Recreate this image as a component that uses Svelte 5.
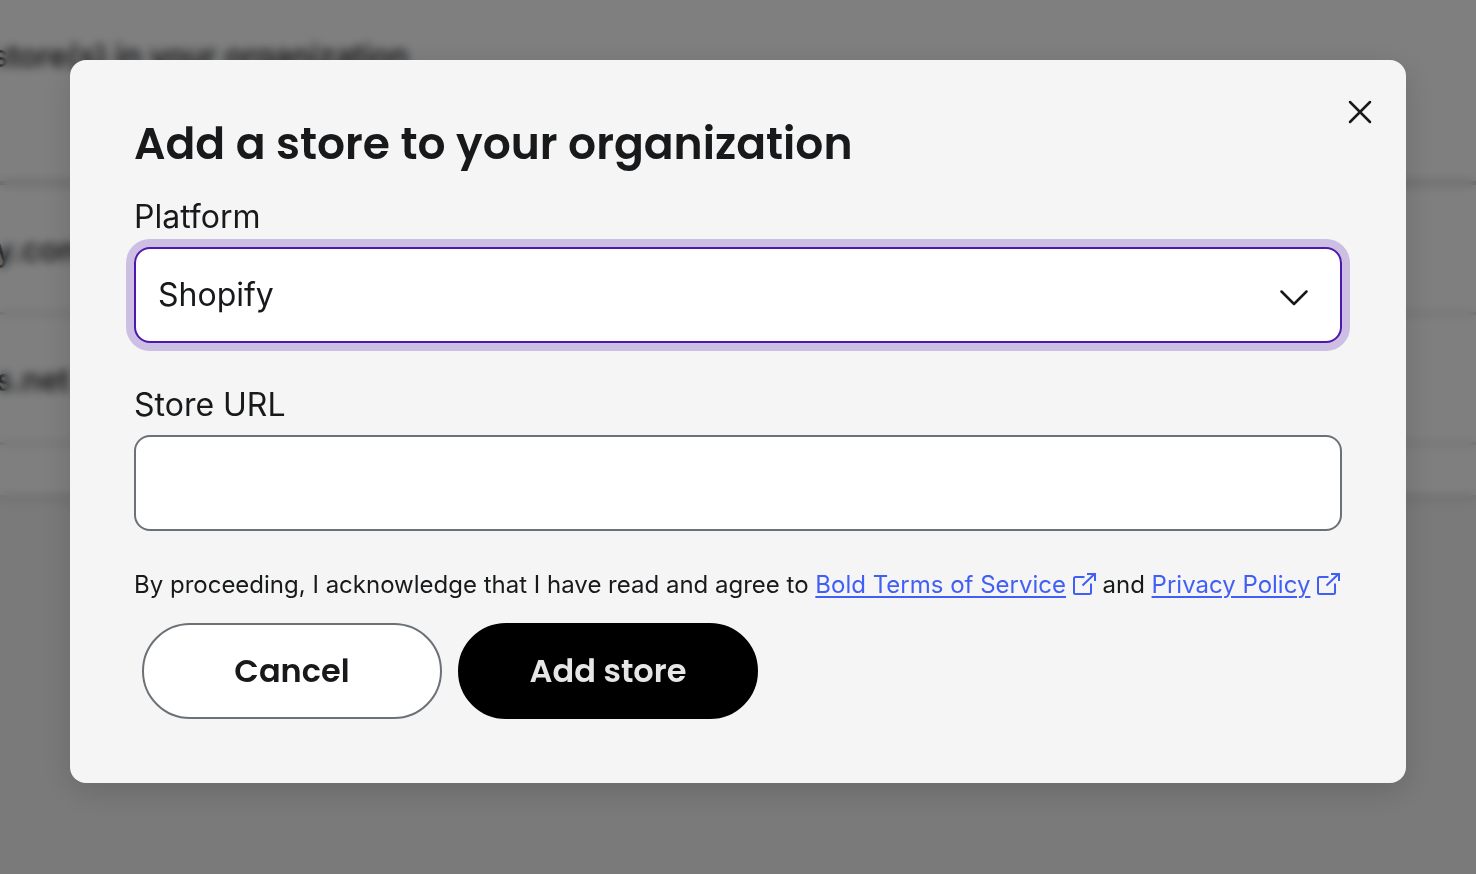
<script lang="ts">
  let open = $state(true);
  let platform = $state("Shopify");
  let storeUrl = $state("");

  const platforms = ["Shopify", "BigCommerce", "WooCommerce"];
  const stores = ["y.com", "s.net"];

  function close() {
    open = false;
  }

  function addStore(e: SubmitEvent) {
    e.preventDefault();
    close();
  }
</script>

{#snippet externalIcon()}
  <svg class="external" viewBox="1 1 23 23" aria-hidden="true">
    <path d="M12.5 5H3.5Q2 5 2 6.500V20.500Q2 22 3.500 22H17.500Q19 22 19 20.500V11.500" />
    <path d="M10.500 13.500L22.500 2M15 2H23V9" />
  </svg>
{/snippet}

<main class="page">
  <div class="card">
    <div class="card-title">store(s) in your organization</div>
    {#each stores as store (store)}
      <div class="store-row">{store}</div>
    {/each}
    <div class="card-footer"></div>
  </div>
</main>

{#if open}
  <div class="overlay">
    <div class="modal" role="dialog" aria-modal="true" aria-labelledby="modal-title">
      <button class="close" type="button" aria-label="Close" onclick={close}>
        <svg viewBox="0 0 24 24" aria-hidden="true">
          <path d="M2 2L22 22M22 2L2 22" />
        </svg>
      </button>

      <h1 id="modal-title">Add a store to your organization</h1>

      <form onsubmit={addStore}>
        <div class="field">
          <label for="platform">Platform</label>
          <div class="select-wrap">
            <select id="platform" class="focused" bind:value={platform}>
              {#each platforms as name}
                <option value={name}>{name}</option>
              {/each}
            </select>
            <svg class="chevron" viewBox="0 0 28 16" aria-hidden="true">
              <path d="M1.500 1.500L14 14L26.500 1.500" />
            </svg>
          </div>
        </div>

        <div class="field">
          <label for="store-url">Store URL</label>
          <input id="store-url" type="text" bind:value={storeUrl} />
        </div>

        <p class="terms">
          By proceeding, I acknowledge that I have read and agree to
          <a href="#terms">Bold Terms of Service</a>
          {@render externalIcon()}
          and
          <a href="#privacy">Privacy Policy</a>
          {@render externalIcon()}
        </p>

        <div class="actions">
          <button class="btn" type="button" onclick={close}>Cancel</button>
          <button class="btn primary" type="submit">Add store</button>
        </div>
      </form>
    </div>
  </div>
{/if}

<style>
  :global(body) {
    margin: 0;
    background: #f4f4f4;
    font-family: Inter, "Liberation Sans", sans-serif;
    color: #18191b;
  }

  .page {
    min-height: 100vh;
    overflow: hidden;
  }

  .card {
    background: #fff;
    box-shadow: 0 2px 8px rgba(0, 0, 0, 0.2);
    font-size: 31px;
    font-weight: 500;
  }

  .card-title {
    box-sizing: border-box;
    height: 185px;
    margin-left: -8px;
    padding-top: 36px;
    line-height: 40px;
    border-bottom: 4px solid #c4c8c8;
  }

  .store-row {
    box-sizing: border-box;
    height: 130px;
    margin-left: -4px;
    line-height: 130px;
    border-bottom: 3px solid #d9d9d9;
  }

  .card-footer {
    height: 50px;
  }

  .overlay {
    position: fixed;
    inset: 0;
    box-sizing: border-box;
    padding: 60px 70px;
    overflow: auto;
    background: rgba(0, 0, 0, 0.5);
    backdrop-filter: blur(5px);
  }

  .modal {
    position: relative;
    padding: 56px 64px 64px;
    background: #f5f5f5;
    border-radius: 16px;
    box-shadow: 0 8px 32px rgba(0, 0, 0, 0.15);
  }

  .close {
    position: absolute;
    top: 36px;
    right: 30px;
    width: 32px;
    height: 32px;
    padding: 4px;
    border: 0;
    background: none;
    cursor: pointer;
  }

  svg {
    fill: none;
    stroke: currentColor;
    stroke-linecap: round;
    stroke-linejoin: round;
  }

  .close svg {
    display: block;
    width: 24px;
    height: 24px;
    color: #18191b;
    stroke-width: 2.5;
  }

  h1 {
    margin: 0 0 23px;
    font-family: Poppins, Inter, sans-serif;
    font-size: 44px;
    line-height: 56px;
    font-weight: 600;
  }

  .field {
    margin-bottom: 40px;
  }

  .field + .field {
    margin-bottom: 36px;
  }

  label {
    display: block;
    margin-bottom: 8px;
    font-size: 32px;
    line-height: 44px;
  }

  select,
  input {
    display: block;
    box-sizing: border-box;
    width: 100%;
    height: 96px;
    padding: 0 22px 2px;
    border: 2px solid #6b7177;
    border-radius: 16px;
    outline: none;
    background: #fff;
    color: #18191b;
    font-family: inherit;
    font-size: 32px;
  }

  select {
    appearance: none;
  }

  select.focused,
  input:focus {
    border-color: #4f17ad;
    box-shadow: 0 0 0 8px #cdbee4;
  }

  .select-wrap {
    position: relative;
  }

  .chevron {
    position: absolute;
    top: 43px;
    right: 34px;
    width: 28px;
    height: 16px;
    stroke-width: 2.5;
    pointer-events: none;
  }

  .terms {
    margin: 0 0 20px;
    font-size: 24px;
    line-height: 36px;
  }

  a {
    color: #425ff5;
    text-decoration-thickness: 2px;
    text-underline-offset: 3px;
  }

  .external {
    width: 23px;
    height: 23px;
    color: #425ff5;
    stroke-width: 2;
    stroke-linecap: butt;
    stroke-linejoin: miter;
    vertical-align: -3px;
  }

  .actions {
    display: flex;
    flex-wrap: wrap;
    gap: 16px;
    padding-left: 8px;
  }

  .btn {
    box-sizing: border-box;
    width: 300px;
    height: 96px;
    border: 2px solid #6b7177;
    border-radius: 48px;
    background: #fff;
    color: #18191b;
    font-family: Poppins, Inter, sans-serif;
    font-size: 32px;
    font-weight: 600;
    cursor: pointer;
  }

  .btn.primary {
    border-color: #000;
    background: #000;
    color: #e6e6e6;
  }
</style>
